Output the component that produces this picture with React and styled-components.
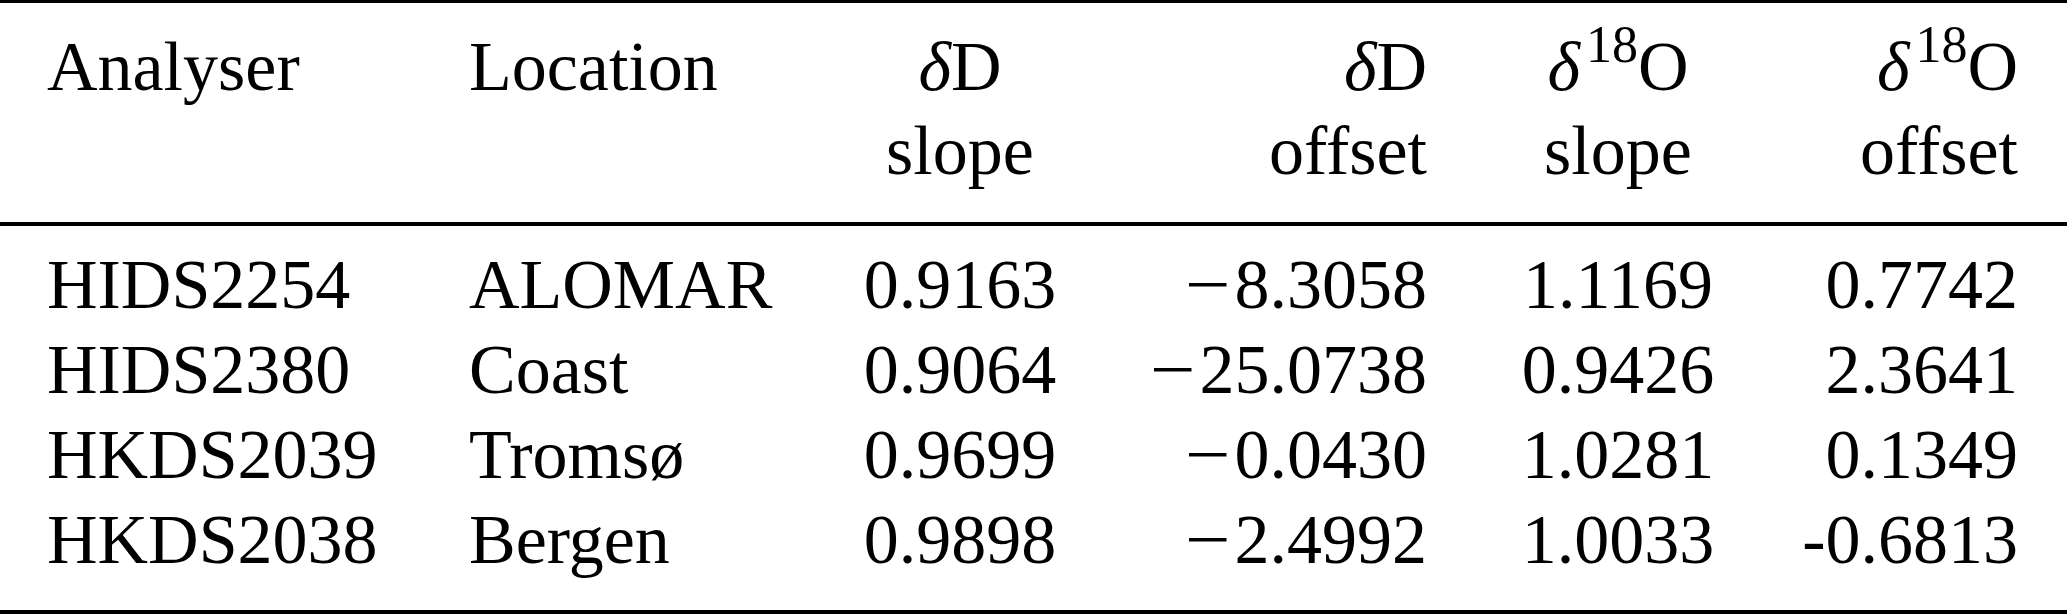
import React from "react"
import styled, { createGlobalStyle } from "styled-components"

const GlobalStyle = createGlobalStyle`
  html, body {
    margin: 0;
    padding: 0;
    background: #fff;
  }
  body {
    font-family: "Liberation Serif", "Times New Roman", serif;
    color: #000;
  }
`

const Table = styled.table`
  width: 2067px;
  table-layout: fixed;
  border-collapse: collapse;
  font-size: 70px;
`

const Head = styled.thead`
  border-top: 3px solid #000;
  border-bottom: 4px solid #000;
`

const Body = styled.tbody`
  border-bottom: 4px solid #000;
`

const HeadCell = styled.th`
  font-weight: normal;
  line-height: 84px;
  vertical-align: top;
  padding: 22px 0 29px;
  text-align: ${(p) => p.$align || "left"};
  &:first-child {
    padding-left: 47px;
  }
  &:nth-child(5) {
    padding-left: 20px;
  }
  &:last-child {
    padding-right: 49px;
  }
`

const Cell = styled.td`
  line-height: 85px;
  padding: ${(p) => (p.$first ? "16px 0 0" : p.$last ? "0 0 28px" : "0")};
  text-align: ${(p) => p.$align || "left"};
  white-space: nowrap;
  &:first-child {
    padding-left: 47px;
  }
  &:nth-child(5) {
    padding-left: 20px;
  }
  &:last-child {
    padding-right: 49px;
  }
`

const Delta = styled.span`
  font-style: italic;
`

const Sup = styled.span`
  font-size: 52px;
  line-height: 0;
  vertical-align: 28px;
  margin-left: 6px;
`

const Minus = styled.span`
  display: inline-block;
  margin-right: 4px;
  transform: scaleX(1.15);
  transform-origin: right center;
`

const widths = [469, 371, 240, 347, 362, 278]
const align = ["left", "left", "center", "right", "center", "right"]

const rows = [
  ["HIDS2254", "ALOMAR", "0.9163", "8.3058", "1.1169", "0.7742"],
  ["HIDS2380", "Coast", "0.9064", "25.0738", "0.9426", "2.3641"],
  ["HKDS2039", "Troms\u00f8", "0.9699", "0.0430", "1.0281", "0.1349"],
  ["HKDS2038", "Bergen", "0.9898", "2.4992", "1.0033", "-0.6813"],
]

const DeltaD = () => (
  <>
    <Delta>δ</Delta>D
  </>
)

const Delta18O = () => (
  <>
    <Delta>δ</Delta>
    <Sup>18</Sup>O
  </>
)

export default function App() {
  return (
    <>
      <GlobalStyle />
      <Table>
        <colgroup>
          {widths.map((w, i) => (
            <col key={i} style={{ width: w }} />
          ))}
        </colgroup>
        <Head>
          <tr>
            <HeadCell $align="left">Analyser</HeadCell>
            <HeadCell $align="left">Location</HeadCell>
            <HeadCell $align="center">
              <DeltaD />
              <br />
              slope
            </HeadCell>
            <HeadCell $align="right">
              <DeltaD />
              <br />
              offset
            </HeadCell>
            <HeadCell $align="center">
              <Delta18O />
              <br />
              slope
            </HeadCell>
            <HeadCell $align="right">
              <Delta18O />
              <br />
              offset
            </HeadCell>
          </tr>
        </Head>
        <Body>
          {rows.map((r, i) => (
            <tr key={r[0]}>
              {r.map((v, j) => (
                <Cell
                  key={j}
                  $align={align[j]}
                  $first={i === 0}
                  $last={i === rows.length - 1}
                >
                  {j === 3 && <Minus>{"\u2212"}</Minus>}
                  {v}
                </Cell>
              ))}
            </tr>
          ))}
        </Body>
      </Table>
    </>
  )
}
